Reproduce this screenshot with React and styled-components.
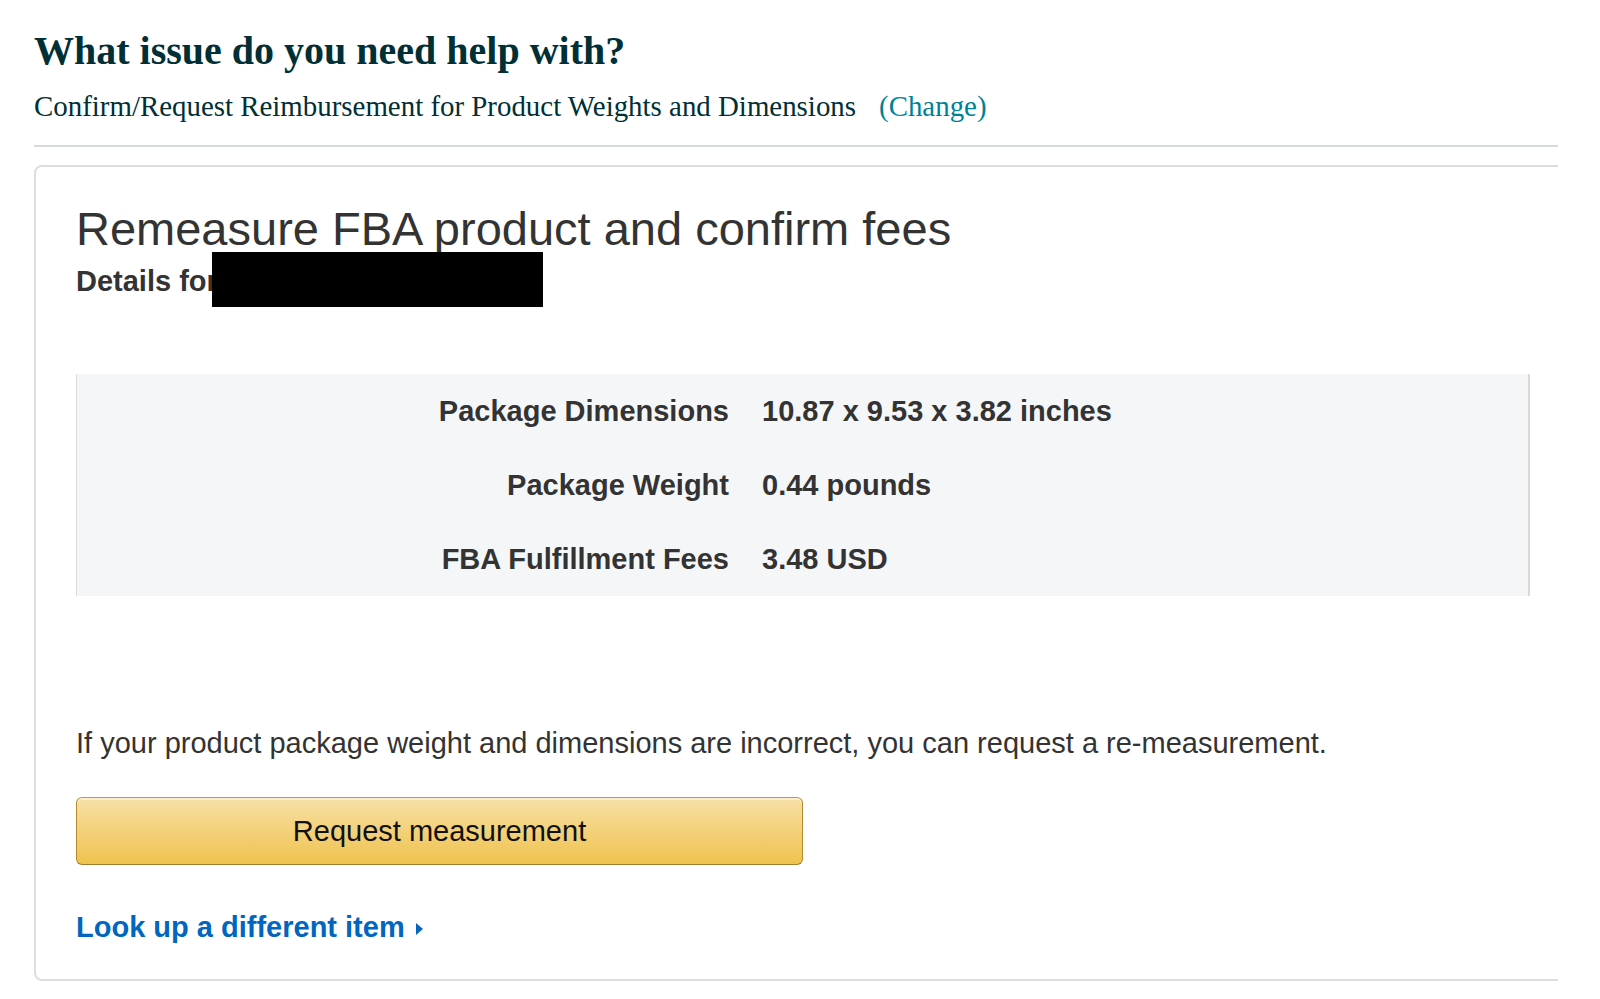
import React from "react";
import styled, { createGlobalStyle } from "styled-components";

const Global = createGlobalStyle`
  html, body { margin: 0; padding: 0; background: #fff; }
  body { font-family: "Liberation Sans", Arial, sans-serif; }
`;

const Page = styled.div`
  padding: 27px 42px 0 34px;
`;

const Title = styled.h1`
  margin: 0;
  font-family: "Liberation Serif", "Times New Roman", serif;
  font-weight: 700;
  font-size: 40px;
  line-height: 48px;
  color: #002f36;
`;

const Subtitle = styled.div`
  margin-top: 14px;
  font-family: "Liberation Serif", "Times New Roman", serif;
  font-size: 28.9px;
  line-height: 35px;
  color: #002f36;
`;

const ChangeLink = styled.a`
  margin-left: 23px;
  color: #008296;
  text-decoration: none;
  cursor: pointer;
`;

const Divider = styled.hr`
  margin: 21px 0 0;
  border: 0;
  height: 2px;
  background: #d5dbdb;
`;

const Clip = styled.div`
  margin-top: 18px;
  overflow: hidden;
`;

const Card = styled.section`
  width: calc(100% + 30px);
  box-sizing: border-box;
  border: 2px solid #dddddd;
  border-radius: 8px;
  padding: 34px 40px 32px 40px;
`;

const CardHeading = styled.h2`
  margin: 0;
  font-size: 47px;
  font-weight: 400;
  line-height: 56px;
  color: #333;
`;

const Details = styled.div`
  position: relative;
  margin-top: 2px;
  font-size: 29px;
  font-weight: 700;
  line-height: 45px;
  color: #333;
`;

const Redaction = styled.span`
  position: absolute;
  left: 136px;
  top: -7px;
  width: 331px;
  height: 55px;
  background: #000;
`;

const InfoBox = styled.div`
  margin-top: 70px;
  width: 1454px;
  box-sizing: border-box;
  background: #f5f6f8;
  border-left: 1px solid #dcdcdc;
  border-right: 2px solid #d9d9d9;
  display: grid;
  grid-template-columns: 652px 1fr;
  column-gap: 33px;
`;

const Label = styled.div`
  text-align: right;
  font-size: 29px;
  font-weight: 700;
  line-height: 74px;
  color: #333;
`;

const Value = styled.div`
  font-size: 29px;
  font-weight: 700;
  line-height: 74px;
  color: #333;
`;

const Paragraph = styled.p`
  margin: 127px 0 0;
  font-size: 29px;
  line-height: 40px;
  color: #333;
`;

const Button = styled.button`
  margin-top: 34px;
  display: block;
  width: 727px;
  height: 68px;
  box-sizing: border-box;
  border: 1px solid #a88734;
  border-color: #c59b3a #b38b2c #9c7e31;
  border-radius: 6px;
  background: linear-gradient(to bottom, #f7e0a7, #f0c24e);
  box-shadow: inset 0 2px 0 rgba(255, 255, 255, 0.45);
  font-family: "Liberation Sans", Arial, sans-serif;
  font-size: 29px;
  color: #111;
  cursor: pointer;
  padding: 0;
`;

const LookupLink = styled.a`
  margin-top: 42px;
  display: inline-flex;
  align-items: center;
  gap: 11px;
  font-size: 29px;
  font-weight: 700;
  line-height: 40px;
  color: #0066c0;
  text-decoration: none;
  cursor: pointer;
`;

const Caret = styled.span`
  display: inline-block;
  width: 0;
  height: 0;
  margin-top: 3px;
  border-top: 6px solid transparent;
  border-bottom: 6px solid transparent;
  border-left: 7px solid #0066c0;
`;

const rows = [
  ["Package Dimensions", "10.87 x 9.53 x 3.82 inches"],
  ["Package Weight", "0.44 pounds"],
  ["FBA Fulfillment Fees", "3.48 USD"],
];

export default function App() {
  return (
    <>
      <Global />
      <Page>
        <Title>What issue do you need help with?</Title>
        <Subtitle>
          Confirm/Request Reimbursement for Product Weights and Dimensions
          <ChangeLink>(Change)</ChangeLink>
        </Subtitle>
        <Divider />
        <Clip>
          <Card>
            <CardHeading>Remeasure FBA product and confirm fees</CardHeading>
            <Details>
              Details for
              <Redaction />
            </Details>
            <InfoBox>
              {rows.map(([label, value]) => (
                <React.Fragment key={label}>
                  <Label>{label}</Label>
                  <Value>{value}</Value>
                </React.Fragment>
              ))}
            </InfoBox>
            <Paragraph>
              If your product package weight and dimensions are incorrect, you can request a re-measurement.
            </Paragraph>
            <Button>Request measurement</Button>
            <LookupLink>
              Look up a different item
              <Caret />
            </LookupLink>
          </Card>
        </Clip>
      </Page>
    </>
  );
}
